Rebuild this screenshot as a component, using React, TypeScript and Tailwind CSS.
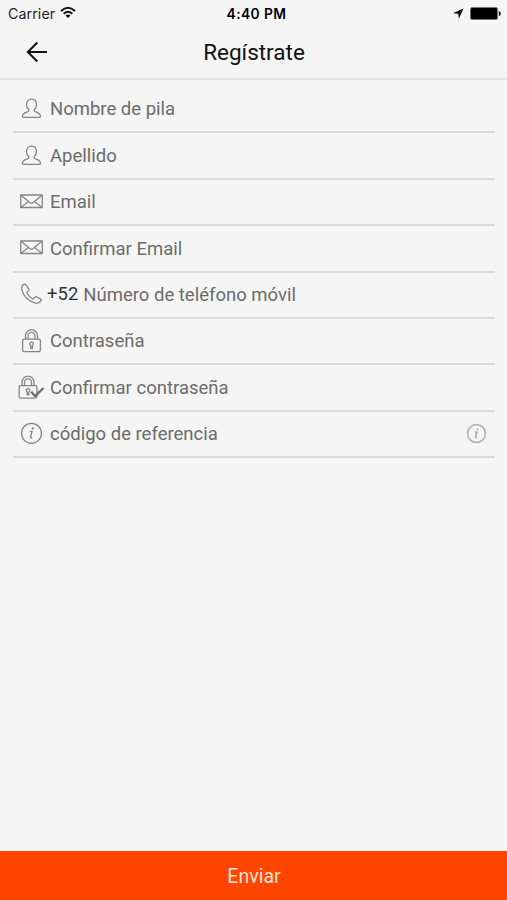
import type { ReactNode } from 'react';

type IconName = 'user' | 'mail' | 'phone' | 'lock' | 'lockCheck' | 'info';

interface Field {
  id: string;
  icon: IconName;
  label: string;
  prefix?: string;
  help?: boolean;
}

const fields: Field[] = [
  { id: 'firstName', icon: 'user', label: 'Nombre de pila' },
  { id: 'lastName', icon: 'user', label: 'Apellido' },
  { id: 'email', icon: 'mail', label: 'Email' },
  { id: 'confirmEmail', icon: 'mail', label: 'Confirmar Email' },
  { id: 'phone', icon: 'phone', label: 'Número de teléfono móvil', prefix: '+52' },
  { id: 'password', icon: 'lock', label: 'Contraseña' },
  { id: 'confirmPassword', icon: 'lockCheck', label: 'Confirmar contraseña' },
  { id: 'referral', icon: 'info', label: 'código de referencia', help: true },
];

const lockShape = (
  <>
    <rect x="6.600" y="14.100" width="17.800" height="12.600" rx="1.600" />
    <path d="M9.500 13.900V10.700a6 6 0 0 1 12 0V13.900M12 13.900v-3a3.500 3.500 0 0 1 7 0v3" />
    <path d="M14.800 20.500a1.800 1.800 0 1 1 1.400 0l.2 2.800h-1.800z" />
  </>
);

const icons: Record<IconName, ReactNode> = {
  user: (
    <path d="M13 16.900c-1.600-1.200-2.500-3-2.500-5.300C10.500 8.200 12.500 6.100 15.500 6.100s5 2.100 5 5.500c0 2.300-.9 4.100-2.500 5.300 0 1.300.7 1.700 2.300 2.200 2.800.9 4.100 2 4.200 4.200 0 .7-.4 1.100-1.100 1.100H7.600c-.7 0-1.100-.4-1.100-1.100.1-2.200 1.400-3.300 4.200-4.200 1.600-.5 2.300-.9 2.300-2.200z" />
  ),
  mail: (
    <>
      <rect x="4.700" y="9" width="21.600" height="12.500" />
      <path d="M5 9.300l9.100 7.500q1.400 1 2.800 0L26 9.300M5 21.200l7.600-5.600M26 21.200l-7.600-5.600" />
    </>
  ),
  phone: (
    <path d="M8.400 5.200C6.300 6.200 5.200 7.900 5.700 10.200c1.500 6.500 6.300 11.600 12.700 13.700 2.800.9 5.200.1 6.600-2.200.4-.7.2-1.200-.4-1.600l-4.100-2.300c-.7-.4-1.200-.2-1.600.4l-.9 1.300c-.4.600-.9.700-1.600.3-2.400-1.400-4.200-3.300-5.400-5.800-.3-.7-.2-1.100.4-1.500l1-.7c.6-.5.700-1 .4-1.600L10 5.800c-.4-.7-.9-.9-1.600-.6z" />
  ),
  lock: lockShape,
  lockCheck: (
    <>
      <g transform="translate(-3.500 -.5)">{lockShape}</g>
      <path d="M15.200 19.800l4 4.300L27.500 16" strokeWidth="2.300" stroke="#6e6e6e" />
    </>
  ),
  info: (
    <>
      <circle cx="15.500" cy="15.300" r="10" />
      <path d="M14 13.300h2.100L14.600 19.100q-.2 1 .6.900l.9-.4" strokeWidth="1.300" />
      <circle cx="16.800" cy="10.500" r=".5" fill="#777" />
    </>
  ),
};

function FieldIcon({ name }: { name: IconName }) {
  return (
    <svg
      className="ml-[3px] h-8 w-8 shrink-0"
      viewBox="0 0 32 32"
      fill="none"
      stroke="#858585"
      strokeWidth="1.3"
      strokeLinejoin="round"
    >
      {icons[name]}
    </svg>
  );
}

function HelpIcon() {
  return (
    <svg className="mr-2 mb-px h-[21px] w-[21px]" viewBox="0 0 21 21" fill="none" stroke="#b4b4b4" strokeWidth="1.7">
      <circle cx="10.500" cy="10.500" r="8.900" />
      <path d="M8.700 9.200h2.200L9.600 14q-.1.800.6.700l1-.5" />
      <circle cx="11.600" cy="6.400" r=".6" fill="#b4b4b4" strokeWidth="1" />
    </svg>
  );
}

function StatusBar() {
  return (
    <div className="grid h-7 grid-cols-[1fr_auto_1fr] items-center pr-[6px] pl-2 text-black">
      <div className="flex items-center gap-[5px] font-['Inter'] text-[14.2px] tracking-[0.1px] text-[#222]">
        Carrier
        <svg className="mb-[3px] h-[13px] w-4" viewBox="0 0 16 13" fill="none" stroke="#111" strokeWidth="2">
          <path d="M1 5Q8-1.600 15 5M3.700 7.700q4.300-3.900 8.600 0" />
          <path d="M8 12L5.500 9.600q2.500-2 5 0z" fill="#111" stroke="none" />
        </svg>
      </div>
      <div className="pl-1 text-center font-['Inter'] text-[13.8px] font-semibold tracking-[0.4px]">4:40 PM</div>
      <div className="flex items-center justify-end gap-[6px] pb-0.5">
        <svg className="h-[11px] w-[11px]" viewBox="0 0 11 11">
          <path d="M10.500.5L0 5.300l5.300.4.5 5z" />
        </svg>
        <svg className="h-[13px] w-[31px]" viewBox="0 0 31 13">
          <rect x=".5" y=".5" width="27" height="12" rx="1.500" fill="#000" stroke="#777" />
          <path d="M28.800 4q2 .5 2 2.500t-2 2.500z" />
        </svg>
      </div>
    </div>
  );
}

function FieldRow({ field }: { field: Field }) {
  return (
    <div className="flex h-[46.42px] items-center border-b-2 border-[#dadada]">
      <FieldIcon name={field.icon} />
      {field.prefix && <span className="mr-[5px] -ml-px text-[18.5px] text-[#333]">{field.prefix}</span>}
      <span className={field.prefix ? 'flex-1 pt-0.5' : 'flex-1 pt-0.5 pl-0.5'}>{field.label}</span>
      {field.help && <HelpIcon />}
    </div>
  );
}

export default function App() {
  return (
    <div className="flex h-screen flex-col bg-[#f5f5f5] font-['Roboto',sans-serif]">
      <StatusBar />
      <header className="relative flex h-[52px] items-center justify-center border-b-2 border-[#e4e4e4]">
        <button className="absolute top-3 left-[26px]" aria-label="Atrás">
          <svg className="h-6 w-[22px]" viewBox="0 0 22 24" fill="none" stroke="#111" strokeWidth="2">
            <path d="M11.300 2.500L1.800 12l9.500 9.500M1.800 12H21" />
          </svg>
        </button>
        <h1 className="pb-0.5 pl-px text-[22.500px] leading-6 text-[#111]">Regístrate</h1>
      </header>

      <main className="flex-1 pt-[7px] pr-3 pl-[13px] text-[18.5px] text-[#6c6c6c]">
        {fields.map((field) => (
          <FieldRow key={field.id} field={field} />
        ))}
      </main>

      <button className="h-[49px] shrink-0 bg-[#ff4500] pt-0.5 pl-px text-[19.5px] text-[#ffe3d8]">Enviar</button>
    </div>
  );
}
